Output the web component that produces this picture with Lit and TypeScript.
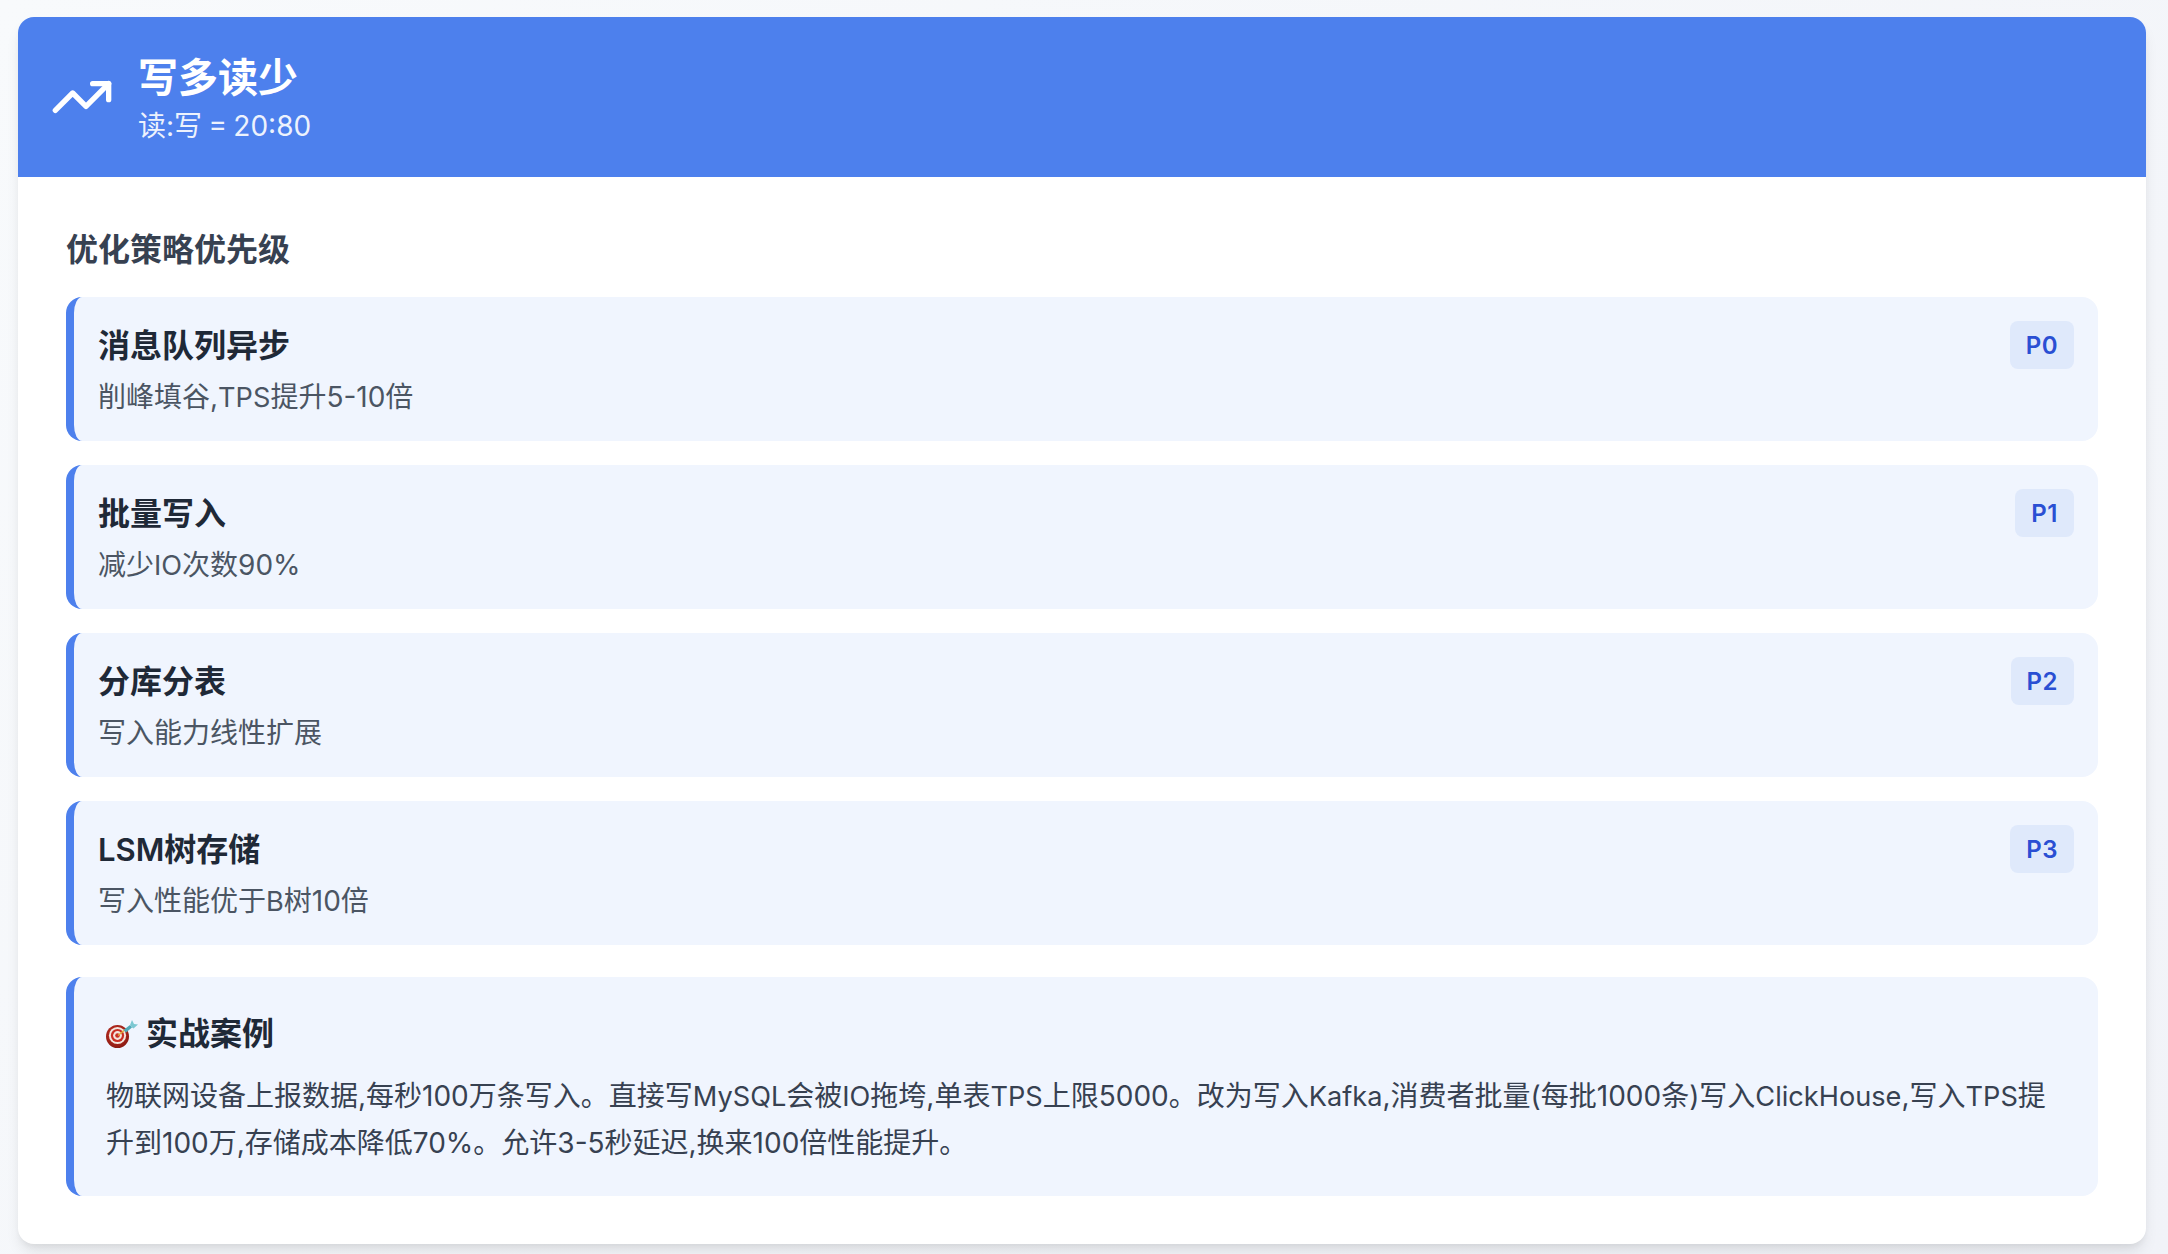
import { LitElement, html, css, svg } from "lit";
import { customElement } from "lit/decorators.js";

const lat = (s: string) => html`<span class="lat">${s}</span>`;

const items = [
  { t: html`消息队列异步`, d: html`削峰填谷,${lat("TPS")}提升5-10倍`, p: "P0" },
  { t: html`批量写入`, d: html`减少${lat("IO")}次数90%`, p: "P1" },
  { t: html`分库分表`, d: html`写入能力线性扩展`, p: "P2" },
  { t: html`${lat("LSM")}树存储`, d: html`写入性能优于${lat("B")}树10倍`, p: "P3" },
];

const dart = svg`
  <defs>
    <radialGradient id="rim" cx="45%" cy="40%" r="60%"><stop offset="0" stop-color="#d8392b"/><stop offset="1" stop-color="#8a1a12"/></radialGradient>
  </defs>
  <circle cx="11.5" cy="18.5" r="11.5" fill="url(#rim)"/>
  <circle cx="11.5" cy="17.5" r="8.6" fill="#f3e6de"/>
  <circle cx="11.5" cy="17.5" r="6.6" fill="#c92f24"/>
  <circle cx="11.5" cy="17.5" r="4.4" fill="#f3e6de"/>
  <circle cx="11.5" cy="17.5" r="2.3" fill="#c92f24"/>
  <path d="M12 17.5 L20 11" stroke="#e2b23a" stroke-width="1.2"/>
  <path d="M17.5 12 L24 7 L26 9.5 L20 14.5Z" fill="#4fa9b8"/>
  <path d="M24 7 L26 2 L28 6 L32 6.5 L27.5 10.5 L26 9.5Z" fill="#7cc8d2"/>
`;

@customElement("app-root")
export class AppRoot extends LitElement {
  static styles = css`
    :host {
      display: block;
      min-height: 1254px;
      background: linear-gradient(135deg, #f8fafc, #f1f3f8);
      font-family: Inter, "Noto Sans CJK SC", sans-serif;
      overflow: hidden;
    }
    .card {
      margin: 17px 22px 0 18px;
      height: 1227px;
      box-sizing: border-box;
      background: #fff;
      border-radius: 16px;
      box-shadow: 0 10px 15px -3px rgba(0, 0, 0, 0.1), 0 4px 6px -2px rgba(0, 0, 0, 0.05);
      overflow: hidden;
    }
    .head {
      height: 160px;
      box-sizing: border-box;
      background: #4d80ed;
      display: flex;
      align-items: center;
      gap: 24px;
      padding: 0 32px;
      color: #fff;
    }
    .head svg { width: 64px; height: 64px; flex: none; }
    .h-text { padding-top: 2px; }
    .h-title { font-size: 40px; font-weight: 700; line-height: 56px; }
    .h-sub { font-size: 28px; line-height: 40px; opacity: 0.9; word-spacing: -1.5px; }
    .body { padding: 49px 48px 0; }
    .sec {
      font-size: 32px;
      font-weight: 600;
      line-height: 48px;
      color: #374151;
      margin-bottom: 23px;
    }
    .list { display: flex; flex-direction: column; gap: 24px; }
    .item {
      height: 144px;
      box-sizing: border-box;
      background: #f0f5fe;
      border-left: 8px solid #4d80ed;
      border-radius: 16px;
      padding: 25px 24px 0;
      display: flex;
      justify-content: space-between;
      align-items: flex-start;
    }
    .lat { font-size: 0.97em; }
    .i-title { font-size: 32px; font-weight: 600; line-height: 48px; color: #1f2937; }
    .i-desc { font-size: 28px; line-height: 40px; color: #4b5563; margin-top: 7px; }
    .badge {
      height: 48px;
      box-sizing: border-box;
      margin-top: -1px;
      padding: 1px 16px 0;
      background: #dfe9fb;
      border-radius: 8px;
      color: #2a4fd3;
      font-size: 24px;
      font-weight: 600;
      line-height: 47px;
      letter-spacing: 0.5px;
    }
    .case {
      margin-top: 32px;
      height: 219px;
      box-sizing: border-box;
      background: #f0f5fe;
      border-left: 8px solid #4d80ed;
      border-radius: 16px;
      padding: 33px 32px 0;
    }
    .c-title {
      display: flex;
      align-items: center;
      gap: 8px;
      font-size: 32px;
      font-weight: 600;
      line-height: 48px;
      color: #1f2937;
      margin-bottom: 15px;
    }
    .c-title svg { width: 32px; height: 32px; flex: none; }
    .c-text { font-size: 28px; line-height: 47px; color: #374151; }
  `;

  render() {
    return html`
      <div class="card">
        <div class="head">
          <svg viewBox="0 0 24 24" fill="none" stroke="#fff" stroke-width="2" stroke-linecap="round" stroke-linejoin="round">
            <polyline points="22 7 13.5 15.5 8.5 10.5 2 17"></polyline>
            <polyline points="16 7 22 7 22 13"></polyline>
          </svg>
          <div class="h-text">
            <div class="h-title">写多读少</div>
            <div class="h-sub">读:写 = 20:80</div>
          </div>
        </div>
        <div class="body">
          <div class="sec">优化策略优先级</div>
          <div class="list">
            ${items.map(
              (i) => html`
                <div class="item">
                  <div>
                    <div class="i-title">${i.t}</div>
                    <div class="i-desc">${i.d}</div>
                  </div>
                  <div class="badge">${i.p}</div>
                </div>
              `
            )}
          </div>
          <div class="case">
            <div class="c-title">
              <svg viewBox="0 0 32 32">${dart}</svg>
              <span>实战案例</span>
            </div>
            <div class="c-text">物联网设备上报数据,每秒100万条写入。直接写${lat("MySQL")}会被${lat("IO")}拖垮,单表${lat("TPS")}上限5000。改为写入${lat("Kafka")},消费者批量(每批1000条)写入${lat("ClickHouse")},写入${lat("TPS")}<span>提</span><span>升到100万,存储成本降低70%。允许3-5秒延迟,换来100倍性能提升。</span></div>
          </div>
        </div>
      </div>
    `;
  }
}
